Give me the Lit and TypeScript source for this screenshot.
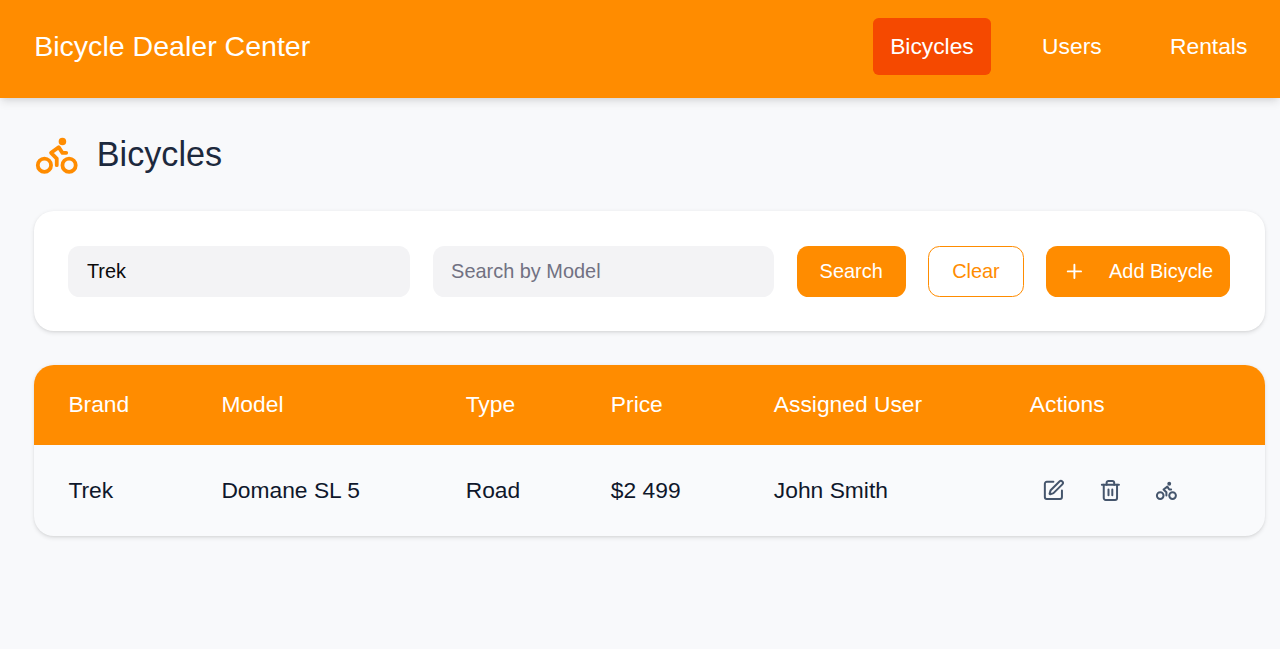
import { LitElement, html, css, svg } from "lit";
import { customElement } from "lit/decorators.js";

const bike = svg`<circle cx="18.5" cy="17.5" r="3.5"/><circle cx="5.5" cy="17.5" r="3.5"/><circle cx="15" cy="5" r="1"/><path d="M12 17.5V14l-3-3 4-3 2 3h2"/>`;
const edit = svg`<path d="M12 3H5a2 2 0 0 0-2 2v14a2 2 0 0 0 2 2h14a2 2 0 0 0 2-2v-7"/><path d="M18.375 2.625a1 1 0 0 1 3 3l-9.013 9.014a2 2 0 0 1-.853.505l-2.873.84a.5.5 0 0 1-.62-.62l.84-2.873a2 2 0 0 1 .506-.852z"/>`;
const trash = svg`<path d="M3 6h18"/><path d="M19 6v14a2 2 0 0 1-2 2H7a2 2 0 0 1-2-2V6"/><path d="M8 6V4a2 2 0 0 1 2-2h4a2 2 0 0 1 2 2v2"/><path d="M10 11v6M14 11v6"/>`;
const plus = svg`<path d="M5 12h14M12 5v14"/>`;

const columns = ["Brand", "Model", "Type", "Price", "Assigned User", "Actions"];
const bicycles = [["Trek", "Domane SL 5", "Road", "$2 499", "John Smith"]];

@customElement("app-root")
export class AppRoot extends LitElement {
  static styles = css`
    :host {
      display: block;
      min-height: 649px;
      background: #f8f9fb;
      color: #0f172b;
      font-family: "Liberation Sans", Arial, sans-serif;
      font-size: 22.8px;
    }
    * { box-sizing: border-box; }
    svg { fill: none; stroke: currentColor; stroke-width: 2; stroke-linecap: round; stroke-linejoin: round; display: block; flex: none; }
    .bar {
      height: 97.5px;
      padding: 18px 15.6px 0 34.2px;
      display: flex;
      justify-content: space-between;
      align-items: flex-start;
      background: #ff8c00;
      color: #fff;
      box-shadow: 0 5.7px 8.5px -1.4px rgba(0, 0, 0, .1), 0 2.8px 5.7px -2.8px rgba(0, 0, 0, .1);
    }
    .name { font-size: 28.55px; line-height: 56px; }
    nav { display: flex; gap: 34.2px; }
    nav a { height: 57px; padding: 0 17.1px; line-height: 56px; border-radius: 5.7px; }
    nav a.on { background: #f54900; }
    main { padding: 34.2px 15px 0 34.2px; }
    h1 { margin: 0; height: 45.5px; display: flex; align-items: center; gap: 17.1px; font-size: 34.17px; font-weight: 400; color: #1d293d; }
    h1 svg { width: 45.5px; height: 45.5px; color: #ff8c00; }
    .card { border-radius: 19.9px; box-shadow: 0 1.4px 4.3px rgba(0, 0, 0, .1), 0 1.4px 2.8px -1.4px rgba(0, 0, 0, .1); }
    .filters { margin-top: 34.2px; padding: 34.2px 34.8px 34.2px 34.2px; background: #fff; display: flex; gap: 22.8px; font-size: 19.93px; }
    input { flex: 1; min-width: 0; height: 51.2px; border: 0; border-radius: 11.4px; padding: 0 18.5px; background: #f3f3f5; font: inherit; color: #0a0a0a; outline: none; }
    input::placeholder { color: #717182; opacity: 1; }
    button { font: inherit; border: 0; margin: 0; }
    .btn { height: 51.2px; padding: 0 22.8px; border-radius: 11.4px; background: #ff8c00; color: #fff; white-space: nowrap; }
    .outline { background: #fff; color: #ff8c00; border: 1px solid #ff8c00; }
    .add { display: flex; align-items: center; gap: 22.8px; padding: 0 17.1px; }
    .add svg { width: 22.8px; height: 22.8px; stroke-width: 2; }
    .table { margin-top: 34.2px; overflow: hidden; background: #f9fafc; }
    .row { display: grid; grid-template-columns: 153px 244.3px 145.2px 163px 256px 1fr; padding-left: 34.2px; align-items: center; height: 91px; }
    .head { background: #ff8c00; color: #fff; height: 80px; padding-bottom: 1px; }
    .actions { display: flex; }
    .icon { width: 45.5px; height: 45.5px; display: grid; place-items: center; padding: 0 0 0 1px; background: none; color: #45556c; margin-right: 11.4px; }
    .icon svg { width: 22.8px; height: 22.8px; stroke-width: 2.1; }
  `;

  private icon(shape: unknown) {
    return html`<svg viewBox="0 0 24 24">${shape}</svg>`;
  }

  render() {
    return html`
      <header class="bar">
        <div class="name">Bicycle Dealer Center</div>
        <nav><a class="on">Bicycles</a><a>Users</a><a>Rentals</a></nav>
      </header>
      <main>
        <h1>${this.icon(bike)}<span>Bicycles</span></h1>
        <section class="card filters">
          <input .value=${"Trek"} placeholder="Search by Brand" />
          <input placeholder="Search by Model" />
          <button class="btn">Search</button>
          <button class="btn outline">Clear</button>
          <button class="btn add">${this.icon(plus)}<span>Add Bicycle</span></button>
        </section>
        <section class="card table">
          <div class="row head">${columns.map((c) => html`<span>${c}</span>`)}</div>
          ${bicycles.map(
            (b) => html`<div class="row">
              ${b.map((v) => html`<span>${v}</span>`)}
              <div class="actions">
                ${[edit, trash, bike].map((s) => html`<button class="icon">${this.icon(s)}</button>`)}
              </div>
            </div>`
          )}
        </section>
      </main>
    `;
  }
}
